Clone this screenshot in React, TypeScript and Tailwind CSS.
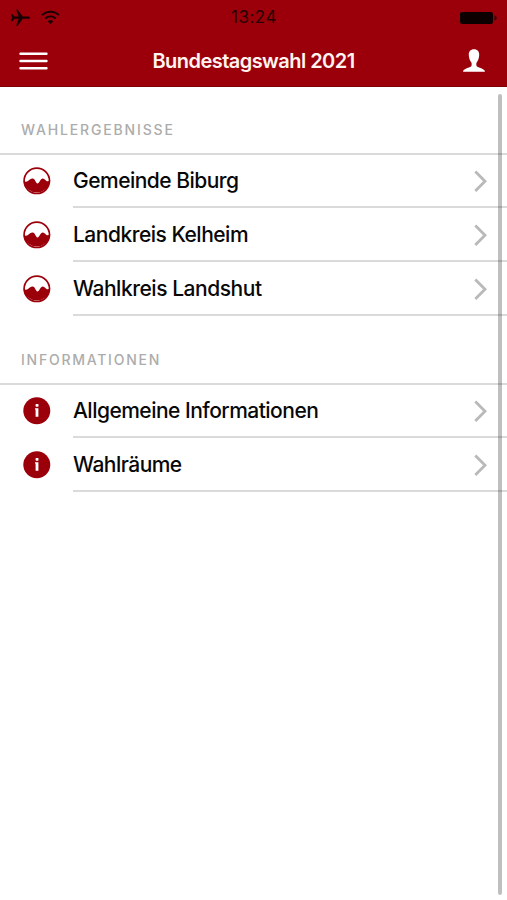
import React from "react";

function ChartIcon() {
  return (
    <svg className="h-7 w-7" viewBox="0 0 28 28">
      <circle cx="13.800" cy="13.800" r="12.700" fill="#fff" stroke="#9b000a" strokeWidth="1.700" />
      <path
        d="M0.600 14.300C2 14.900 3.600 15.100 5 14.100C6.700 12.700 7.800 11.500 9.800 11.600C12.100 11.800 12.600 16.400 14.500 16.500C16.300 16.500 17.400 11.400 19.900 11.500C21.900 11.600 22.400 13.700 24 14.200C25.200 14.500 26.300 14 27.200 13.200A13.400 13.400 0 0 1 0.600 14.300Z"
        fill="#9b000a"
      />
    </svg>
  );
}

function InfoIcon() {
  return (
    <svg className="h-7 w-7" viewBox="0 0 28 28">
      <circle cx="13.800" cy="13.700" r="13.500" fill="#9b000a" />
      <rect x="12.600" y="7.100" width="2.900" height="2.600" rx="0.600" fill="#fff" />
      <path d="M12 11.200H15.400V19.800H12.600V12.500H12Z" fill="#fff" />
    </svg>
  );
}

function Row({ kind, label, tracking }: { kind: "chart" | "info"; label: string; tracking: string }) {
  return (
    <li className="flex h-[53.800px] pl-[23px]">
      <span className="flex w-[50px] shrink-0 items-center">{kind === "chart" ? <ChartIcon /> : <InfoIcon />}</span>
      <span className="flex flex-1 items-center justify-between border-b-2 border-[#dadada] pt-px pr-5">
        <span className={`text-[21px] leading-none font-[450] whitespace-nowrap text-[#080808] ${tracking}`}>{label}</span>
        <svg className="h-6 w-[13px]" viewBox="0 0 13 24">
          <path d="M1.300 2.500L11 12.200L1.300 21.900" fill="none" stroke="#b9b9b9" strokeWidth="2.800" />
        </svg>
      </span>
    </li>
  );
}

function SectionTitle({ children, className }: { children: string; className: string }) {
  return (
    <h2 className={`flex items-end border-b-2 border-[#dadada] pb-[15px] pl-[21px] text-[14px] leading-4 font-medium text-[#acacac] ${className}`}>
      {children}
    </h2>
  );
}

export default function App() {
  return (
    <div className="relative h-[900px] w-[507px] overflow-hidden bg-white font-['Inter','Liberation_Sans',sans-serif]">
      <header className="h-[87px] border-b border-[#7d0007] bg-[#9b000a]">
        <div className="grid h-[35px] grid-cols-3 items-center pr-[9px] pl-[10px]">
          <div className="flex items-center gap-[10px]">
            <svg className="h-[17px] w-[21px]" viewBox="0 0 21 17">
              <path
                d="M20 8.700C20 7.800 18.700 7.600 17 7.600H12.800L7.500 0.500H6.200L8.600 7.600H4.500L2.300 5H1L2.100 8.700L1 12.400H2.300L4.500 9.800H8.600L6.200 16.900H7.500L12.800 9.800H17C18.700 9.800 20 9.600 20 8.700Z"
                fill="#190001"
              />
            </svg>
            <svg className="h-[15px] w-[19px]" viewBox="0 0 19 15">
              <path d="M1 5.200C5.700 0.500 13.300 0.500 18 5.200M4.200 8.500C7.200 5.700 11.800 5.700 14.800 8.500" fill="none" stroke="#190001" strokeWidth="1.900" />
              <path d="M6.600 11.200C8.200 9.800 10.800 9.800 12.400 11.200L9.500 14.100Z" fill="#190001" />
            </svg>
          </div>
          <time className="text-center text-[17px] leading-none tracking-[0.500px] text-[#260002]">13:24</time>
          <svg className="h-3 w-[38px] justify-self-end" viewBox="0 0 38 12">
            <rect width="33" height="12" rx="2" fill="#0c0001" />
            <path d="M34.500 3.300Q39 6 34.500 8.700Z" fill="#250002" />
          </svg>
        </div>
        <div className="flex h-[51px] items-center justify-between pr-[22px] pl-[19px]">
          <svg className="h-[18px] w-[29px]" viewBox="0 0 29 18">
            <path d="M1.500 1.700H27.500M1.500 9H27.500M1.500 16.200H27.500" stroke="#fff" strokeWidth="2.400" strokeLinecap="round" />
          </svg>
          <h1 className="mr-1 text-[20px] leading-none font-semibold tracking-[-0.540px] text-[#fff4ef]">Bundestagswahl 2021</h1>
          <svg className="h-[23px] w-[22px]" viewBox="0 0 22 23">
            <path
              d="M11 0.300C7.500 0.300 5.600 2.600 5.800 6C5.900 8.900 6.700 11.600 8.200 13.300C8.800 14 8.900 16.200 8.300 17.200C7 18.900 0.300 19.200 0 22.700H22C21.700 19.200 15 18.900 13.700 17.200C13.100 16.200 13.200 14 13.800 13.300C15.300 11.600 16.100 8.900 16.200 6C16.400 2.600 14.500 0.300 11 0.300Z"
              fill="#fff"
            />
          </svg>
        </div>
      </header>
      <main>
        <SectionTitle className="h-[67.600px] tracking-[1.840px]">WAHLERGEBNISSE</SectionTitle>
        <ul>
          <Row kind="chart" label="Gemeinde Biburg" tracking="tracking-[-0.520px]" />
          <Row kind="chart" label="Landkreis Kelheim" tracking="tracking-[-0.500px]" />
          <Row kind="chart" label="Wahlkreis Landshut" tracking="tracking-[-0.460px]" />
        </ul>
        <SectionTitle className="h-[68.600px] tracking-[1.750px]">INFORMATIONEN</SectionTitle>
        <ul>
          <Row kind="info" label="Allgemeine Informationen" tracking="tracking-[-0.520px]" />
          <Row kind="info" label="Wahlräume" tracking="tracking-[-0.520px]" />
        </ul>
      </main>
      <div className="absolute top-[94px] left-[498px] h-[801px] w-1 rounded-sm bg-black/25" />
    </div>
  );
}
